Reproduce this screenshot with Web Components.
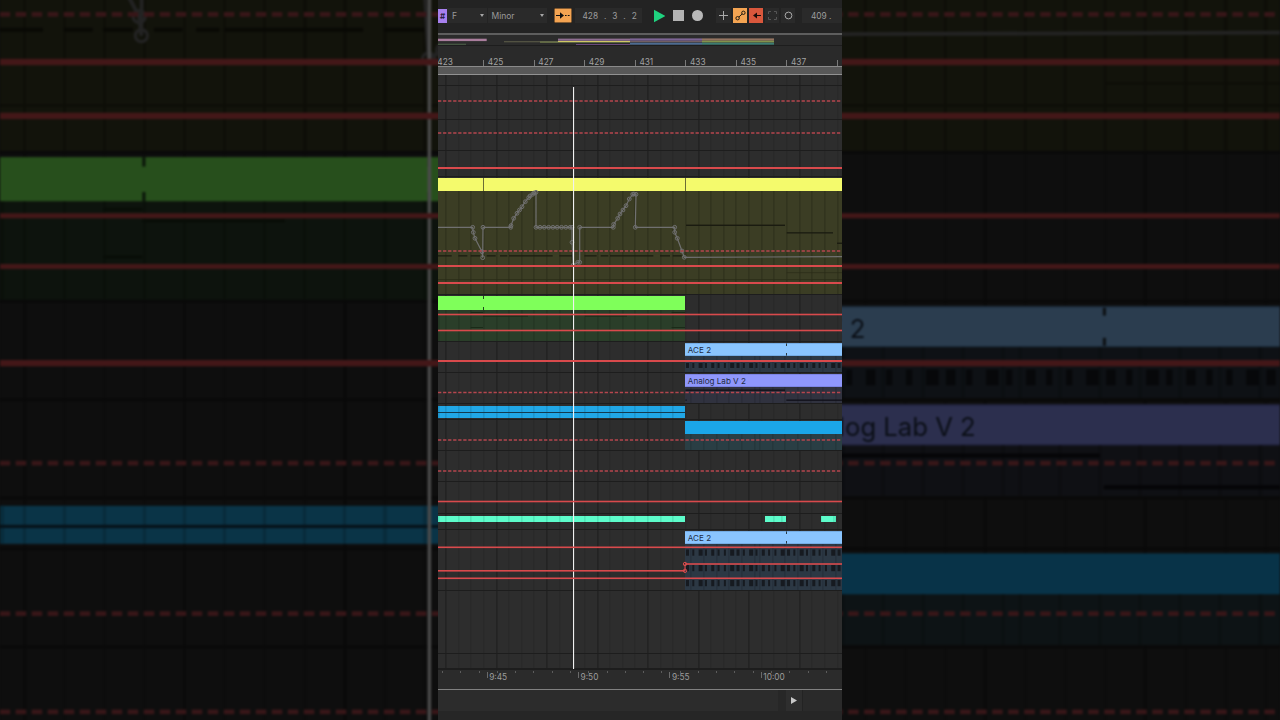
<!DOCTYPE html>
<html lang="en"><head><meta charset="utf-8"><title>Arrangement</title>
<style>
html,body{margin:0;height:100%;background:#0e0e0e;overflow:hidden}
body{font-family:Inter,"Liberation Sans",sans-serif}
</style></head><body>
<daw-app></daw-app>
<script>
const reg=(name,css,html,setup)=>customElements.define(name,class extends HTMLElement{
  connectedCallback(){
    if(this.shadowRoot)return;
    const r=this.attachShadow({mode:'open'});
    r.innerHTML=`<style>${css}</style>${typeof html==='function'?html(this):html}`;
    if(setup)setup(this,r);
  }
});

reg('daw-app',`
  :host{display:flex;width:1280px;height:720px;overflow:hidden;
    --grid-x:7.4px;
    --grid:repeating-linear-gradient(90deg,#1f1f1f 0 1px,transparent 1px 50.52px),repeating-linear-gradient(90deg,#272727 0 1px,transparent 1px 12.63px);}
  .center{flex:0 0 404px;display:flex;flex-direction:column;min-width:0;background:#252525;position:relative}
  daw-backdrop{flex:0 0 438px}
`,`
  <daw-backdrop side="left"></daw-backdrop>
  <div class="center">
    <daw-toolbar></daw-toolbar>
    <daw-overview></daw-overview>
    <daw-bar-ruler></daw-bar-ruler>
    <daw-arrangement labels="all"></daw-arrangement>
    <daw-time-ruler></daw-time-ruler>
    <daw-footer></daw-footer>
  </div>
  <daw-backdrop side="right"></daw-backdrop>
`);

reg('daw-backdrop',`
  :host{display:block;height:720px;overflow:hidden;background:#0e0e0e}
  .wrap{width:100%;height:100%;filter:brightness(.31) blur(.9px)}
  daw-arrangement{transform-origin:0 0}
`,h=>{
  const left=h.getAttribute('side')==='left';
  const tx=left?-0.34:-842.34;
  return `<div class="wrap"><daw-arrangement labels="${left?'none':'upper'}" style="transform:translate(${tx}px,-543.45px) scale(3.17)"></daw-arrangement></div>`;
});

reg('daw-dropdown',`
  :host{display:flex;align-items:center;justify-content:space-between;height:15px;box-sizing:border-box;background:#2a2a2a;color:#9a9a9a;font-size:8.5px;padding:0 3px 0 5px}
  i{width:0;height:0;border:2.2px solid transparent;border-top:3px solid #a5a5a5;border-bottom:0}
`,`<slot></slot><i></i>`);

reg('daw-btn',`
  :host{display:flex;align-items:center;justify-content:center;height:15px;box-sizing:border-box;background:var(--b,#2a2a2a)}
`,`<slot></slot>`);

reg('daw-readout',`
  :host{display:flex;align-items:center;height:15px;box-sizing:border-box;background:#2a2a2a;color:#9d9d9d;font-size:8.3px;white-space:pre}
`,`<slot></slot>`);

reg('daw-toolbar',`
  :host{display:flex;align-items:center;height:33px;flex:none;background:#232323;box-sizing:border-box;padding-bottom:2px}
  .key{flex:0 0 9px;height:14px;background:#a780ee;color:#2b1f45;font-size:8px;font-weight:700;display:flex;align-items:center;justify-content:center;overflow:hidden}
  daw-dropdown.f{flex:0 0 40px;margin-right:.5px}
  daw-dropdown.m{flex:0 0 59px;padding-left:4px}
  .o{flex:0 0 18px;margin-left:7px;--b:#f4a452;box-shadow:inset 0 0 0 .5px #111}
  .pos{flex:0 0 67px;margin-left:3px;padding-left:8px;word-spacing:3.6px}
  .tr{margin-left:12.500px;display:block}
  .stop{margin-left:8px;width:11px;height:11px;background:#b3b3b3}
  .rec{margin-left:8px;width:11.5px;height:11.5px;border-radius:50%;background:#b8b8b8}
  .g{display:flex;gap:2px;margin-left:13px}
  .g daw-btn{flex:0 0 14px}
  .g .plus{flex-basis:15px;background:#2a2a2a}
  .tempo{flex:0 0 40px;margin-left:7px;padding-left:9px}
`,`
  <div class="key">#</div>
  <daw-dropdown class="f">F</daw-dropdown>
  <daw-dropdown class="m">Minor</daw-dropdown>
  <daw-btn class="o"><svg width="14" height="9" viewBox="0 0 14 9"><path d="M0 4.5h5" stroke="#111" stroke-width="1"/><path d="M4 1.2 8 4.5 4 7.8z" fill="#111"/><path d="M9 4.5h1.6M11.8 4.5h1.8" stroke="#111"/></svg></daw-btn>
  <daw-readout class="pos">428 . 3 . 2</daw-readout>
  <svg class="tr" width="12" height="14" viewBox="0 0 12 14"><path d="M0 .5 12 7 0 13.5z" fill="#1fd27f"/></svg>
  <div class="stop"></div>
  <div class="rec"></div>
  <div class="g">
    <daw-btn class="plus"><svg width="9" height="9" viewBox="0 0 9 9"><path d="M4.5 0v9M0 4.5h9" stroke="#a9a9a9" stroke-width="1"/></svg></daw-btn>
    <daw-btn style="--b:#f4a452"><svg width="11" height="11" viewBox="0 0 11 11" fill="none" stroke="#221a10" stroke-width="1"><circle cx="2.6" cy="8.2" r="1.7"/><circle cx="8.4" cy="2.8" r="1.7"/><path d="M3.9 7 7.1 4"/></svg></daw-btn>
    <daw-btn style="--b:#d9573c"><svg width="11" height="9" viewBox="0 0 11 9"><path d="M5 4.5h5" stroke="#1a0d0a"/><path d="M6 1.500 2 4.5 6 7.500z" fill="#1a0d0a"/></svg></daw-btn>
    <daw-btn><svg width="9" height="9" viewBox="0 0 9 9" fill="none" stroke="#555" stroke-width="1"><path d="M.5 3V.5H3M6 .5h2.5V3M8.500 6v2.500H6M3 8.500H.5V6"/></svg></daw-btn>
    <daw-btn><svg width="9" height="9" viewBox="0 0 9 9" fill="none" stroke="#a9a9a9" stroke-width="1"><circle cx="4.500" cy="4.500" r="3.400"/></svg></daw-btn>
  </div>
  <daw-readout class="tempo">409 .</daw-readout>
`);

reg('daw-overview',`
  :host{display:block;flex:none;height:13px;border-top:2px solid #5e5e5e;border-bottom:1px solid #1d1d1d;box-sizing:border-box;background:#2b2b2b}
  svg{display:block;filter:blur(.25px)}
`,()=>{
  const s=[[438,486.7,38.7,2.4,'#a97d9c'],[438,466,43.8,.8,'#55704f'],[504,558,41.4,.8,'#6d6d52'],[540,630,41.6,1,'#7c8a52'],[558,630,38.6,2.2,'#8d6d90'],[558,630,41,1,'#cfc765'],[576,630,44,1,'#6a4a7c'],
  [630,702,38.4,2.3,'#7c6494'],[630,702,41.2,1,'#836d72'],[630,702,42.7,2,'#4c6b92'],[702,774,38.4,2.3,'#947461'],[702,774,40.7,1.8,'#82924c'],[702,774,42.7,2,'#3c7c72']];
  return `<svg width="404" height="10" viewBox="438 35 404 10">${s.map(a=>`<rect x="${a[0]}" y="${a[2]}" width="${a[1]-a[0]}" height="${a[3]}" fill="${a[4]}"/>`).join('')}</svg>`;
});

reg('daw-bar-ruler',`
  :host{display:flex;flex-direction:column;flex:none;height:29px;background:#2a2a2a;overflow:hidden}
  .labels{flex:0 0 20px;display:flex;align-items:flex-end;margin-left:-5.2px}
  .c{flex:0 0 50.52px;box-sizing:border-box;padding-left:4.500px;height:8px;line-height:8px;margin-bottom:.5px;font-size:8.300px;color:#a2a2a2;
     background:linear-gradient(#7a7a7a,#7a7a7a) 0 2px/1px 6px no-repeat}
  .band{flex:1;background:#585858;border-top:1px solid #8a8a8a;border-bottom:1px solid #929292}
`,()=>`<div class="labels">${[423,425,427,429,431,433,435,437,439].map(n=>`<div class="c">${n===439?'':n}</div>`).join('')}</div><div class="band"></div>`);

reg('daw-clip',`
  :host{display:flex;align-items:center;flex:none;box-sizing:border-box;overflow:hidden;white-space:nowrap;font-size:8.100px;color:#1f2c44;padding-left:2.800px}
`,`<slot></slot>`,h=>{
  const x=+h.getAttribute('x'),w=+h.getAttribute('w'),c=h.getAttribute('c');
  const p=h.previousElementSibling;
  const ml=x-(p?(+p.getAttribute('x')+ +p.getAttribute('w')):0);
  h.style.marginLeft=ml+'px';
  h.style.width=w+'px';
  h.style.height=h.getAttribute('h')+'px';
  const layers=[];
  const t=h.getAttribute('ticks');
  const H=+h.getAttribute('h');
  const dk=h.getAttribute('dk')||'#2a3a44';
  if(t)t.split(',').forEach(v=>{
    const px=(+v-x);
    layers.push(`linear-gradient(${dk},${dk}) ${px}px 0/1px 3px no-repeat`,`linear-gradient(${dk},${dk}) ${px}px ${H-3}px/1px 3px no-repeat`);
  });
  const ln=h.getAttribute('lines');
  if(ln)ln.split(',').forEach(v=>{layers.push(`linear-gradient(${dk},${dk}) ${+v-x}px 0/1px 100% no-repeat`);});
  if(h.hasAttribute('mid'))layers.push(`linear-gradient(#123a50,#123a50) 0 ${H/2-.5}px/100% 1px no-repeat`);
  if(h.hasAttribute('grid')){
    const off=7.4-x;
    const g=h.getAttribute('grid');
    layers.push(`repeating-linear-gradient(90deg,${g} 0 1px,transparent 1px 12.63px) ${off}px 0`);
  }
  h.style.background=(layers.length?layers.join(',')+',':'')+c;
  const b=h.getAttribute('edge');
  if(b)h.style.boxShadow=`inset 0 .5px 0 ${b},inset 0 -.5px 0 ${b}`;
});

reg('daw-lane',`:host{display:flex;flex:none;height:var(--h,auto)}`,`<slot></slot>`);

reg('daw-track',`
  :host{display:flex;flex-direction:column;box-sizing:border-box;flex:none;border-bottom:1px solid #1d1d1d;overflow:hidden}
`,`<slot></slot>`,h=>{
  h.style.height=h.getAttribute('h')+'px';
  h.style.paddingTop=(h.getAttribute('pt')||0)+'px';
});

reg('daw-arrangement',`
  :host{display:block;position:relative;flex:none;width:404px;height:594px;overflow:hidden;background-color:#2d2d2d;
    background-image:var(--grid);background-position:var(--grid-x) 0}
  .tracks{display:flex;flex-direction:column}
  daw-automation{position:absolute;inset:0}
`,h=>{
  const m=h.getAttribute('labels');
  const up=m!=='none', low=m==='all';
  const Y='#f4fa6c',G='#7fff5a',A='#8ac5ff',V='#8f97fc',B='#21a7e6',T='#5dfccb';
  return `<div class="tracks">
  <daw-track h="11"></daw-track>
  <daw-track h="34"></daw-track>
  <daw-track h="31"></daw-track>
  <daw-track h="26"></daw-track>
  <daw-track h="118" pt=".5">
    <daw-lane><daw-clip x="0" w="404" h="13" c="${Y}" lines="45,247" dk="#6b6c34"></daw-clip></daw-lane>
    <daw-lane><daw-clip x="0" w="404" h="104" c="#3b3d24" grid="#2c2e1a"></daw-clip></daw-lane>
  </daw-track>
  <daw-track h="47" pt="1">
    <daw-lane><daw-clip x="0" w="247" h="14" c="${G}" ticks="45,135" dk="#1f4a1f"></daw-clip></daw-lane>
    <daw-lane><daw-clip x="0" w="247" h="31" c="#2a3e29" grid="#213220"></daw-clip></daw-lane>
  </daw-track>
  <daw-track h="31" pt="1">
    <daw-lane><daw-clip x="247" w="157" h="13" c="${A}" ticks="348" edge="#5f93c9">${up?'ACE 2':''}</daw-clip></daw-lane>
    <daw-lane><daw-clip x="247" w="157" h="16" c="#2c3844" grid="#232d38"></daw-clip></daw-lane>
  </daw-track>
  <daw-track h="31" pt="1">
    <daw-lane><daw-clip x="247" w="157" h="13" c="${V}" edge="#6a72cc">${up?'Analog Lab V 2':''}</daw-clip></daw-lane>
    <daw-lane><daw-clip x="247" w="157" h="16" c="#30323f" grid="#272934"></daw-clip></daw-lane>
  </daw-track>
  <daw-track h="16" pt="2">
    <daw-lane><daw-clip x="0" w="247" h="12" c="${B}" mid grid="#1a8abf"></daw-clip></daw-lane>
  </daw-track>
  <daw-track h="31" pt="1">
    <daw-lane><daw-clip x="247" w="157" h="13" c="#1ba6e8"></daw-clip></daw-lane>
    <daw-lane><daw-clip x="247" w="157" h="16" c="#2a3e44" grid="#223337"></daw-clip></daw-lane>
  </daw-track>
  <daw-track h="31"></daw-track>
  <daw-track h="32"></daw-track>
  <daw-track h="16" pt="2">
    <daw-lane><daw-clip x="0" w="247" h="6" c="${T}" grid="#4ad8ad"></daw-clip><daw-clip x="327" w="21" h="6" c="${T}" grid="#4ad8ad"></daw-clip><daw-clip x="383" w="15" h="6" c="${T}" grid="#4ad8ad"></daw-clip></daw-lane>
  </daw-track>
  <daw-track h="61" pt="1">
    <daw-lane><daw-clip x="247" w="157" h="13" c="${A}" ticks="348" edge="#5f93c9">${low?'ACE 2':''}</daw-clip></daw-lane>
    <daw-lane><daw-clip x="247" w="157" h="46" c="#2c3844" grid="#232d38"></daw-clip></daw-lane>
  </daw-track>
  <daw-track h="63"></daw-track>
  <daw-track h="15"></daw-track>
  </div>
  <daw-automation></daw-automation>`;
});

reg('daw-automation',`:host{display:block;pointer-events:none} svg{display:block}`,()=>{
  let o='';
  const rect=(x1,x2,y,h,f)=>`<rect x="${x1}" y="${y}" width="${x2-x1}" height="${h}" fill="${f}"/>`;
  [[24,65],[85,112],[122,150],[170,197],[210,232],[237,368],[388,428],[463,500],[512,535],[540,670],[690,720],[728,755]].forEach(a=>{o+=rect(430+a[0]/3,430+a[1]/3,255.2,1.3,'#1c1d10');});
  o+=rect(686,785,224.6,1.4,'#1a1b10')+rect(786.7,833,232.2,1.3,'#1a1b10')+rect(837,842,242.6,1.3,'#1a1b10');
  o+=rect(438,842,279.3,.8,'#2a2b18')+rect(786.7,842,272.4,.7,'#2a2b18');
  o+=rect(470.700,483,312,1,'#1a2b18')+rect(483,528,315.6,1,'#1a2b18')+rect(585,627,315.6,1,'#1a2b18')+rect(671.600,685,312,1,'#1a2b18')+rect(470.700,483,327,1,'#1a2b18')+rect(671.600,685,327,1,'#1a2b18');
  o+=rect(685.500,785,389.500,1.300,'#101018')+rect(786.300,842,399.500,1.300,'#101018')+rect(685.500,686.700,399.500,1.300,'#101018');
  const pat=[3,2,4,2,3,2,2,4];
  [[363,5],[549.5,6.2],[565,6.2],[580,6.2]].forEach(r=>{
    let i=0;
    for(let x=686;x<842;x+=6.315){o+=rect(x,x+pat[i%8],r[0],r[1],'#161a20');i++;}
  });
  const pts=[[438,227.3],[472.7,227.3],[473.3,232.3],[475,238.3],[482,251.7],[482.7,257.7],[483,227.3],[510.7,227.3],[511,225.6],[513.7,218.3],[517,213.3],[522,206.7],[525.3,201.7],[528.7,197.7],[532.7,194.3],[536,192.3],[536,227.3],[572,227.3],[572,242.3],[573.3,265],[577.7,262.3],[579.7,262.3],[579.7,227.3],[613.3,227.3],[613.7,224.3],[617.7,218.3],[620,214],[626,205.7],[629.3,199],[632.7,194.3],[636,194.3],[635.3,227.3],[674.7,227.3],[674.7,232.3],[677.3,238.3],[682,251],[684.3,257.3]];
  o+=`<polyline points="${pts.map(p=>p.join(',')).join(' ')} 842,256.7" fill="none" stroke="#707070" stroke-width="1.200"/>`;
  const cs=pts.slice(1);
  for(let x=540;x<572;x+=4.3)cs.push([x,227.3]);
  cs.push([519.5,210],[530,196],[534,193],[623,210],[634,194]);
  cs.forEach(p=>{o+=`<circle cx="${p[0]}" cy="${p[1]}" r="1.900" fill="none" stroke="#707070" stroke-width="1"/>`;});
  o+=`<rect x="573" y="87" width="1.100" height="582" fill="#f0f0f0"/>`;
  const R='#d94a4c', D='#b5464e';
  [168,266,283,361].forEach(y=>{o+=rect(438,842,y-1,2,R);});
  [314.5,330.5,501.5,547.3,578.3].forEach(y=>{o+=rect(438,842,y-.8,1.600,R);});
  [101,133,251,392.5,440,471].forEach(y=>{o+=`<line x1="438" x2="842" y1="${y}" y2="${y}" stroke="${D}" stroke-width="1.500" stroke-dasharray="3.300 1.750"/>`;});
  o+=rect(438,685,570,1.600,R)+rect(685,842,563.2,1.600,R)+rect(684.500,685.500,564,7,R);
  o+=`<circle cx="685" cy="564" r="1.700" fill="none" stroke="${R}" stroke-width="1"/><circle cx="685" cy="570.800" r="1.700" fill="none" stroke="${R}" stroke-width="1"/>`;
  return `<svg width="404" height="594" viewBox="438 75 404 594">${o}</svg>`;
});

reg('daw-time-ruler',`
  :host{display:flex;flex:none;height:19.500px;box-sizing:border-box;background:#2b2b2b;overflow:hidden;padding-left:48.700px;border-top:1px solid #1d1d1d;
   background-image:repeating-linear-gradient(90deg,#5c5c5c 0 1px,transparent 1px 18.280px);background-size:100% 2px;background-repeat:no-repeat;background-position:3.500px 1px}
  .c{flex:0 0 91.400px;box-sizing:border-box;padding:3px 0 0 2.500px;height:12px;font-size:8.300px;line-height:9px;color:#9c9c9c;
     background:linear-gradient(#6a6a6a,#6a6a6a) 0 1.500px/1px 6px no-repeat}
`,`<div class="c">9:45</div><div class="c">9:50</div><div class="c">9:55</div><div class="c">10:00</div>`);

reg('daw-footer',`
  :host{display:flex;flex-direction:column;flex:1;border-top:1.500px solid #808080;background:#262626}
  .bar{flex:0 0 21px;display:flex;background:#2c2c2c}
  .s{flex:0 0 340px;background:#2c2c2c}
  .gap{flex:0 0 8px;background:#272727}
  .p{flex:0 0 16px;display:flex;align-items:center;justify-content:center;background:#2e2e2e}
  .d{width:1px;background:#232323}
  .r{flex:1;background:#2a2a2a}
`,`<div class="bar"><div class="s"></div><div class="gap"></div><div class="p"><svg width="6" height="7" viewBox="0 0 6 7"><path d="M0 0 6 3.500 0 7z" fill="#c8c8c8"/></svg></div><div class="d"></div><div class="r"></div></div>`);
</script>
</body></html>
